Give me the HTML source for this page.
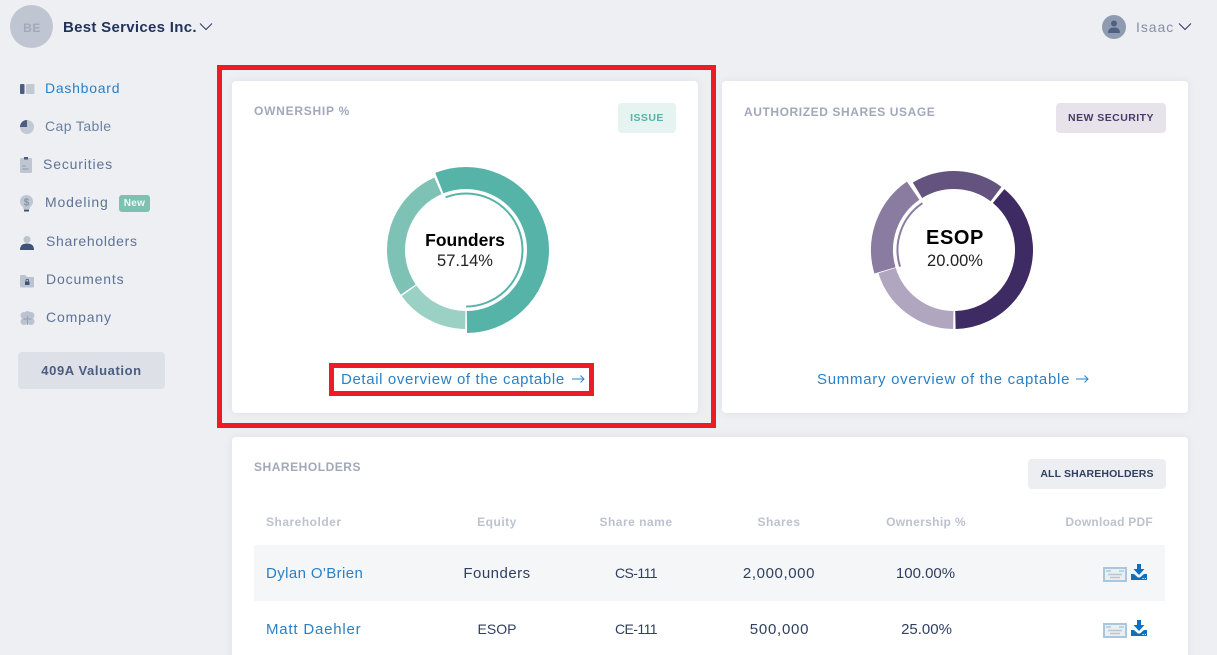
<!DOCTYPE html>
<html lang="en"><head><meta charset="utf-8"><title>Dashboard</title>
<style>
html,body{margin:0;padding:0;width:1217px;height:655px;overflow:hidden;background:#edeff3;font-family:"Liberation Sans",sans-serif}
#p{position:relative;width:1217px;height:655px;overflow:hidden}
.a,.t{position:absolute}
.t{white-space:nowrap;line-height:16px}
.c{transform:translateX(-50%)}
.r{transform:translateX(-100%)}
.card{position:absolute;background:#fff;border-radius:4px;box-shadow:0 0 8px rgba(120,130,150,.12)}
.nav{font-size:14px;letter-spacing:.85px;color:#5e7396}
.h{font-size:12px;font-weight:bold;color:#a0a8ba;letter-spacing:.53px}
.th{font-size:12px;font-weight:bold;color:#bcc2ce;letter-spacing:.5px}
.td{font-size:15px;color:#2f3f60;letter-spacing:.5px}
.btn{position:absolute;border-radius:4px;font-size:10.5px;font-weight:bold;text-align:center;letter-spacing:.45px}
.lnk{color:#2b80c5;font-size:15px;letter-spacing:.63px}
svg{position:absolute;overflow:visible}
circle{fill:none}
</style></head><body><div id="p">

<!-- top bar -->
<div class="a" style="left:10px;top:5px;width:43px;height:43px;border-radius:50%;background:#c0c6d1"></div>
<div class="t c" style="left:32px;top:20px;font-size:12px;font-weight:bold;color:#a1a9ba;letter-spacing:.6px">BE</div>
<div class="t" style="left:63px;top:20px;font-size:15px;font-weight:bold;color:#22335a;letter-spacing:.3px">Best Services Inc.</div>
<svg style="left:199px;top:22px" width="14" height="10"><path d="M1 1.500 7 7.500 13 1.500" fill="none" stroke="#2a3a5e" stroke-width="1"/></svg>

<svg style="left:1102px;top:15px" width="24" height="24"><circle cx="12" cy="12" r="12" style="fill:#8f9bb0"/><circle cx="12" cy="8.500" r="3" style="fill:#4f6080"/><path d="M6 18c0-4 2.500-5.500 6-5.500s6 1.500 6 5.500z" fill="#4f6080"/></svg>
<div class="t" style="left:1136px;top:19px;font-size:14px;color:#8290a8;letter-spacing:.95px">Isaac</div>
<svg style="left:1178px;top:22px" width="14" height="10"><path d="M1 1.500 7 7.500 13 1.500" fill="none" stroke="#2a3a5e" stroke-width="1"/></svg>

<!-- sidebar -->
<svg style="left:20px;top:84px" width="15" height="10"><rect width="4.500" height="10" rx="1" fill="#4a5d83"/><rect x="6" width="8.500" height="10" rx="1" fill="#c2c8d4"/></svg>
<div class="t nav" style="left:45px;top:80px;color:#2b80c5;letter-spacing:.75px">Dashboard</div>

<svg style="left:20px;top:120px" width="14" height="14"><circle cx="7" cy="7" r="7" style="fill:#c2c8d4"/><path d="M7 0A7 7 0 0 0 0 7H7Z" fill="#4a5d83"/></svg>
<div class="t nav" style="left:45px;top:118px;color:#6c819f;letter-spacing:.4px">Cap Table</div>

<svg style="left:20px;top:157px" width="12" height="16"><rect y="1" width="12" height="15" rx="1.500" fill="#bfc6d2"/><rect x="4" width="4" height="2.500" fill="#4a5d83"/><path d="M2.500 9h3M2.500 12h6" stroke="#8d98ac" stroke-width="1"/></svg>
<div class="t nav" style="left:43px;top:156px">Securities</div>

<svg style="left:20px;top:195px" width="14" height="18"><circle cx="6.500" cy="6.500" r="6.500" style="fill:#bfc6d2"/><path d="M2.500 10h8L9.500 14H3.500z" fill="#bfc6d2"/><path d="M4 14.500h5v2H4z" fill="#3f5175"/><text x="6.500" y="10.500" font-size="10" font-weight="bold" text-anchor="middle" fill="#8691a6" font-family="Liberation Sans">$</text></svg>
<div class="t nav" style="left:45px;top:194px">Modeling</div>
<div class="a" style="left:119px;top:195px;width:31px;height:17px;border-radius:3px;background:#7bc2b3;color:#eef8f6;font-size:10px;font-weight:bold;line-height:17px;text-align:center;letter-spacing:.3px">New</div>

<svg style="left:20px;top:236px" width="14" height="14"><circle cx="7" cy="3.500" r="3.500" style="fill:#bcc3d0"/><path d="M0 14c0-5 3-6.500 7-6.500s7 1.500 7 6.500z" fill="#3f5378"/></svg>
<div class="t nav" style="left:46px;top:233px;letter-spacing:.7px">Shareholders</div>

<svg style="left:20px;top:275px" width="14" height="13"><path d="M0 1.500Q0 0 1.500 0H5L7 2H13Q14 2 14 3V11Q14 12.500 13 12.500H1Q0 12.500 0 11Z" fill="#bcc3d0"/><rect x="5" y="6.500" width="4.500" height="3.500" rx=".5" fill="#3f5378"/><path d="M6 7V5.500a1.200 1.200 0 0 1 2.500 0V7" fill="none" stroke="#3f5378" stroke-width=".8"/></svg>
<div class="t nav" style="left:46px;top:271px">Documents</div>

<svg style="left:20px;top:311px" width="15" height="15"><circle cx="4" cy="4.500" r="3.500" style="fill:#bcc3d0"/><circle cx="11" cy="4.500" r="3.500" style="fill:#bcc3d0"/><circle cx="4" cy="10.500" r="3.500" style="fill:#bcc3d0"/><circle cx="11" cy="10.500" r="3.500" style="fill:#bcc3d0"/><circle cx="7.500" cy="3" r="3" style="fill:#bcc3d0"/><rect x="3" y="5" width="9" height="6" fill="#bcc3d0"/><path d="M7.500 5v9M3.500 8h8" stroke="#9aa4b6" stroke-width="1.200"/></svg>
<div class="t nav" style="left:46px;top:309px">Company</div>

<div class="btn" style="left:18px;top:352px;width:147px;height:37px;background:#dde0e7;color:#4a5d80;font-size:13px;line-height:37px;letter-spacing:.6px">409A Valuation</div>

<!-- card 1 -->
<div class="card" style="left:232px;top:81px;width:466px;height:332px"></div>
<div class="t h" style="left:254px;top:103px;letter-spacing:.75px">OWNERSHIP %</div>
<div class="btn" style="left:618px;top:103px;width:58px;height:30px;line-height:30px;background:#e5f4f1;color:#55b3a8">ISSUE</div>

<svg style="left:365.500px;top:150px" width="200" height="200" viewBox="0 0 200 200">
  <g transform="rotate(-90 100 100)">
    <circle cx="100" cy="100" r="72" stroke="#55b3a8" stroke-width="22" pathLength="360" stroke-dasharray="200.800 159.200" transform="rotate(-21.300 100 100)"/>
    <circle cx="100" cy="100" r="70" stroke="#9bd0c5" stroke-width="18" pathLength="360" stroke-dasharray="53.500 306.500" transform="rotate(181 100 100)"/>
    <circle cx="100" cy="100" r="70" stroke="#7dc2b5" stroke-width="18" pathLength="360" stroke-dasharray="100.500 259.500" transform="rotate(236 100 100)"/>
    <circle cx="100" cy="100" r="56.500" stroke="#55b3a8" stroke-width="2" pathLength="360" stroke-dasharray="201 159" transform="rotate(-21 100 100)"/>
  </g>
</svg>
<div class="t c" style="left:465px;top:232px;font-size:17.500px;font-weight:bold;color:#000">Founders</div>
<div class="t c" style="left:465px;top:253px;font-size:16.500px;color:#222">57.14%</div>

<div class="t lnk" style="left:341px;top:372px">Detail overview of the captable</div>
<svg style="left:572px;top:373px" width="13" height="12"><path d="M0 6H12M8.500 2.500 12 6 8.500 9.500" fill="none" stroke="#2b80c5" stroke-width="1"/></svg>

<!-- card 2 -->
<div class="card" style="left:722px;top:81px;width:466px;height:332px"></div>
<div class="t h" style="left:744px;top:104px;letter-spacing:.58px">AUTHORIZED SHARES USAGE</div>
<div class="btn" style="left:1056px;top:103px;width:110px;height:30px;line-height:30px;background:#e7e3ea;color:#4a3a6b">NEW SECURITY</div>

<svg style="left:854px;top:150px" width="200" height="200" viewBox="0 0 200 200">
  <g transform="rotate(-90 100 100)">
    <circle cx="100" cy="100" r="70" stroke="#3e2b63" stroke-width="18" pathLength="360" stroke-dasharray="139 221" transform="rotate(40 100 100)"/>
    <circle cx="100" cy="100" r="70" stroke="#b0a6bf" stroke-width="18" pathLength="360" stroke-dasharray="72 288" transform="rotate(181 100 100)"/>
    <circle cx="100" cy="100" r="72" stroke="#8a7ba0" stroke-width="22" pathLength="360" stroke-dasharray="71.500 288.500" transform="rotate(254 100 100)"/>
    <circle cx="100" cy="100" r="70" stroke="#64537f" stroke-width="18" pathLength="360" stroke-dasharray="68 292" transform="rotate(329 100 100)"/>
    <circle cx="100" cy="100" r="56.500" stroke="#8a7ba0" stroke-width="2" pathLength="360" stroke-dasharray="73 287" transform="rotate(253 100 100)"/>
  </g>
</svg>
<div class="t c" style="left:955px;top:230px;font-size:20px;font-weight:bold;color:#000;letter-spacing:.6px">ESOP</div>
<div class="t c" style="left:955px;top:253px;font-size:16.500px;color:#222">20.00%</div>

<div class="t lnk" style="left:817px;top:372px;letter-spacing:.72px">Summary overview of the captable</div>
<svg style="left:1076px;top:373px" width="13" height="12"><path d="M0 6H12M8.500 2.500 12 6 8.500 9.500" fill="none" stroke="#2b80c5" stroke-width="1"/></svg>

<!-- card 3 -->
<div class="card" style="left:232px;top:437px;width:956px;height:230px"></div>
<div class="t h" style="left:254px;top:459px">SHAREHOLDERS</div>
<div class="btn" style="left:1028px;top:459px;width:138px;height:30px;line-height:30px;background:#eceef1;color:#2f3f60;letter-spacing:.13px">ALL SHAREHOLDERS</div>

<div class="t th" style="left:266px;top:514px">Shareholder</div>
<div class="t th c" style="left:497px;top:514px">Equity</div>
<div class="t th c" style="left:636px;top:514px">Share name</div>
<div class="t th c" style="left:779px;top:514px">Shares</div>
<div class="t th c" style="left:926px;top:514px;letter-spacing:.35px">Ownership %</div>
<div class="t th r" style="left:1153px;top:514px;letter-spacing:.25px">Download PDF</div>

<div class="a" style="left:254px;top:545px;width:911px;height:56px;background:#f5f6f8"></div>

<div class="t lnk" style="left:266px;top:565.500px;letter-spacing:.4px">Dylan O'Brien</div>
<div class="t td c" style="left:497px;top:566px">Founders</div>
<div class="t td c" style="left:636px;top:565px;font-size:14px;letter-spacing:-.55px">CS-111</div>
<div class="t td c" style="left:779px;top:566px;letter-spacing:.6px">2,000,000</div>
<div class="t td c" style="left:925.500px;top:566px;letter-spacing:0">100.00%</div>

<div class="t lnk" style="left:266px;top:621.500px;letter-spacing:.8px">Matt Daehler</div>
<div class="t td c" style="left:497px;top:621px;font-size:14px;letter-spacing:0">ESOP</div>
<div class="t td c" style="left:636px;top:621px;font-size:14px;letter-spacing:-.55px">CE-111</div>
<div class="t td c" style="left:779.500px;top:622px;letter-spacing:.75px">500,000</div>
<div class="t td c" style="left:926.500px;top:622px;letter-spacing:0">25.00%</div>

<svg style="left:1102.500px;top:566.500px" width="25" height="15">
  <rect x="1" y="1" width="22" height="13" fill="#e8eff5" stroke="#a8c6dc" stroke-width="2"/>
  <path d="M3 3h5v2H3zM16 3h5v2h-5z" fill="#bcd4e6"/>
  <path d="M5 7.500h14M7 10.500h10" stroke="#bcc4cc" stroke-width="1.500"/>
</svg>
<svg style="left:1131px;top:564px" width="16" height="16">
  <path d="M6 0h4v5h3.500L8 11 2.500 5H6z" fill="#0b6fc2"/>
  <path d="M0 10H3L7 13.500H9L13 10H16V16H0Z" fill="#0b6fc2"/>
  <path d="M11.500 14h1.200v1h-1.200zM13.800 14H15v1h-1.200z" fill="#fff"/>
</svg>
<svg style="left:1102.500px;top:622.500px" width="25" height="15">
  <rect x="1" y="1" width="22" height="13" fill="#e8eff5" stroke="#a8c6dc" stroke-width="2"/>
  <path d="M3 3h5v2H3zM16 3h5v2h-5z" fill="#bcd4e6"/>
  <path d="M5 7.500h14M7 10.500h10" stroke="#bcc4cc" stroke-width="1.500"/>
</svg>
<svg style="left:1131px;top:620px" width="16" height="16">
  <path d="M6 0h4v5h3.500L8 11 2.500 5H6z" fill="#0b6fc2"/>
  <path d="M0 10H3L7 13.500H9L13 10H16V16H0Z" fill="#0b6fc2"/>
  <path d="M11.500 14h1.200v1h-1.200zM13.800 14H15v1h-1.200z" fill="#fff"/>
</svg>

<!-- red highlights -->
<div class="a" style="left:217px;top:65px;width:489px;height:353px;border:5px solid #ed1c24"></div>
<div class="a" style="left:329px;top:363px;width:255px;height:23px;border:5px solid #ed1c24"></div>
</div></body></html>
